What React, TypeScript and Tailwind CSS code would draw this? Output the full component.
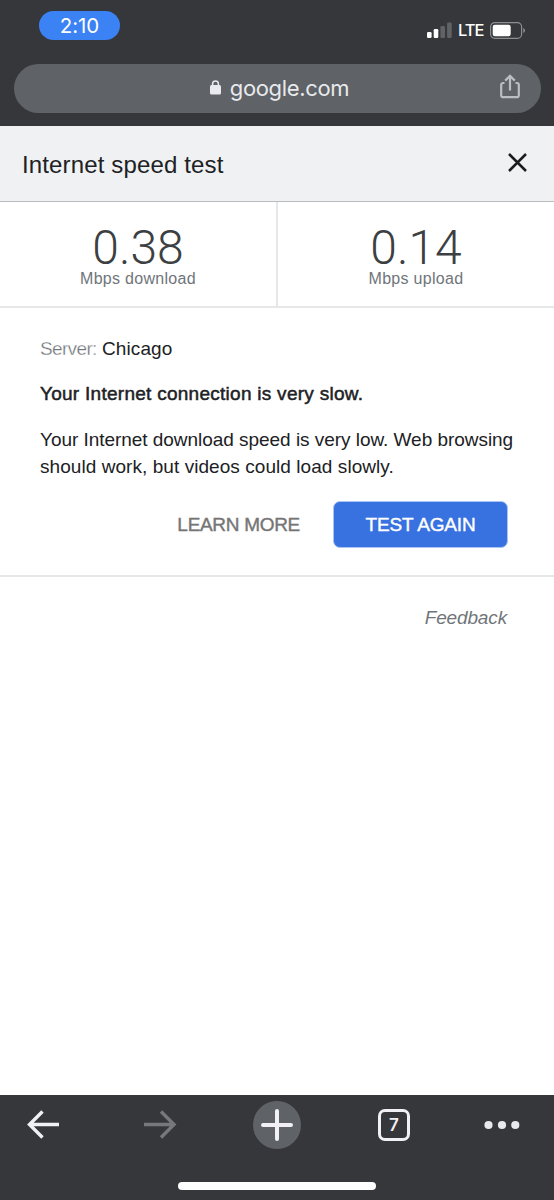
import React from 'react';

const StatusBar: React.FC = () => (
  <div className="flex h-16 items-start justify-between pl-[39px] pr-[28px]">
    <div className="mt-[11px] flex h-[29px] w-[81px] items-center justify-center rounded-full bg-[#3b82f5] pt-px font-['Inter'] text-[20.5px] leading-none tracking-[-0.1px] text-white">
      2:10
    </div>
    <div className="mt-[22px] flex h-[17px] items-center">
      {/* Signal strength */}
      <svg width="25" height="17" viewBox="0 0 25 17">
        <rect x="0" y="10" width="4.6" height="6" rx="1.2" fill="#fff" />
        <rect x="6.7" y="7" width="4.6" height="9" rx="1.2" fill="#fff" />
        <rect x="13.4" y="4" width="4.6" height="12" rx="1.2" fill="#616266" />
        <rect x="20.1" y="0.5" width="4.6" height="15.5" rx="1.2" fill="#616266" />
      </svg>
      <span className="ml-[6px] w-[26px] whitespace-nowrap font-['Inter'] text-[16.5px] font-medium leading-none tracking-[-1px] text-white">
        LTE
      </span>
      {/* Battery */}
      <svg className="ml-[6px]" width="36" height="17" viewBox="0 0 36 17">
        <rect x="0.6" y="0.6" width="31" height="15.8" rx="4.2" fill="none" stroke="#8d8e91" strokeWidth="1.2" />
        <rect x="2.7" y="2.7" width="18" height="11.6" rx="2.2" fill="#fff" />
        <path d="M33.3 6v5c1.1-.4 1.7-1.4 1.7-2.5S34.4 6.4 33.3 6Z" fill="#8d8e91" />
      </svg>
    </div>
  </div>
);

const AddressBar: React.FC = () => (
  <div className="relative mx-[13.5px] flex h-[48.5px] items-center justify-center rounded-full bg-[#5f6267]">
    <svg className="mt-[-1px] mr-[9px]" width="11" height="15" viewBox="0 0 11 15">
      <path d="M2.6 7V4a2.9 2.9 0 0 1 5.8 0V7" fill="none" stroke="#e8eaed" strokeWidth="1.5" />
      <rect x="0" y="5" width="11" height="9.5" rx="1.5" fill="#e8eaed" />
    </svg>
    <span className="mr-[-5px] whitespace-nowrap font-['Inter'] text-[22px] leading-none tracking-[-0.35px] text-[#e8eaed]">
      google.com
    </span>
    <svg className="absolute right-[21px] top-[10px]" width="20" height="25" viewBox="0 0 20 25" fill="none" stroke="#bcbec1" strokeWidth="2.2">
      <path d="M4.5 9H3a1.8 1.8 0 0 0-1.8 1.8v10.6A1.8 1.8 0 0 0 3 23.2h14a1.8 1.8 0 0 0 1.8-1.8V10.8A1.8 1.8 0 0 0 17 9h-1.5" />
      <path d="M10 16.5V2.3M5.2 6.6 10 1.9l4.8 4.7" />
    </svg>
  </div>
);

interface StatProps {
  value: string;
  label: string;
}

const Stat: React.FC<StatProps> = ({ value, label }) => (
  <div className="flex flex-1 flex-col items-center pt-[23px]">
    <span className="font-['Roboto'] text-[48px] font-light leading-[46px] text-[#3c4043]">{value}</span>
    <span className="text-[16px] leading-[16px] tracking-[0.3px] text-[#70757a]">{label}</span>
  </div>
);

const BottomBar: React.FC = () => (
  <div className="flex h-[105px] flex-col bg-[#36373a]">
    <div className="flex h-[60px] items-center pl-[27px] pr-[34px]">
      <svg width="33" height="30" viewBox="0 0 33 30" fill="none" stroke="#f1f1f5" strokeWidth="3.4">
        <path d="M32 14.5H2.3M15.5 1.5 2.5 14.5 15.5 27.5" />
      </svg>
      <svg className="ml-[84px]" width="33" height="30" viewBox="0 0 33 30" fill="none" stroke="#77787b" strokeWidth="3.4">
        <path d="M0 14.5h29.7M17 1.5 30 14.5 17 27.5" />
      </svg>
      <div className="ml-[76px] flex size-12 items-center justify-center rounded-full bg-[#5f6267]">
        <svg width="32" height="32" viewBox="0 0 32 32" stroke="#f1f1f5" strokeWidth="4" strokeLinecap="round">
          <path d="M16 2v28M2 16h28" />
        </svg>
      </div>
      <div className="ml-[77px] flex size-[32px] items-center justify-center rounded-[7px] border-[3px] border-[#f1f1f5] font-['Inter'] text-[17px] font-semibold leading-none text-[#f1f1f5]">
        7
      </div>
      <svg className="ml-auto" width="36" height="10" viewBox="0 0 36 10" fill="#e8e9ed">
        <circle cx="4.5" cy="5" r="4.1" />
        <circle cx="18" cy="5" r="4.1" />
        <circle cx="31.3" cy="5" r="4.1" />
      </svg>
    </div>
    {/* Home indicator */}
    <div className="mx-auto mt-[27px] h-[8px] w-[198px] rounded-full bg-white" />
  </div>
);

export default function App() {
  return (
    <div className="flex h-[1200px] w-[554px] flex-col bg-white font-['Liberation_Sans',sans-serif] text-[#202124]">
      <div className="h-[126px] bg-[#36373a]">
        <StatusBar />
        <AddressBar />
      </div>

      <header className="flex h-[76px] items-center justify-between border-b border-[#bbbcbe] bg-[#f0f1f3] pl-[22px] pr-[27px]">
        <h1 className="mt-[2px] whitespace-nowrap text-[24px] leading-none tracking-[0.14px]">Internet speed test</h1>
        <svg className="mt-[-3px]" width="19" height="19" viewBox="0 0 19 19" stroke="#1b1c1e" strokeWidth="2.5">
          <path d="m1 1 17 17M18 1 1 18" />
        </svg>
      </header>

      <div className="flex h-[106px] border-b-2 border-[#e6e7e8]">
        <Stat value="0.38" label="Mbps download" />
        <div className="w-[2px] bg-[#e6e7e8]" />
        <Stat value="0.14" label="Mbps upload" />
      </div>

      <section className="h-[269px] border-b-2 border-[#e6e7e8] pl-[40px] pr-[46px] pt-[27px] text-[19px] leading-[27px]">
        <p>
          <span className="mr-[0.7px] tracking-[-0.65px] text-[#70757a] [-webkit-text-stroke:0.3px_#fff]">Server: </span>
          <span className="tracking-[0.1px]">Chicago</span>
        </p>
        <p className="mt-[18px] whitespace-nowrap tracking-[0.27px] [-webkit-text-stroke:0.5px_#202124]">
          Your Internet connection is very slow.
        </p>
        <p className="mt-[19px] whitespace-nowrap">
          <span className="tracking-[-0.04px]">Your Internet download speed is very low. Web browsing</span>
          <br />
          <span className="tracking-[0.06px]">should work, but videos could load slowly.</span>
        </p>
        <div className="mt-[21px] flex items-center justify-end gap-[33px]">
          <button className="whitespace-nowrap tracking-[-0.3px] text-[#757575] [-webkit-text-stroke:0.4px_#757575]">LEARN MORE</button>
          <button className="h-[47px] w-[175px] whitespace-nowrap rounded-[7px] border border-[#a9c4f5] bg-[#3871e0] tracking-[-0.15px] text-white [-webkit-text-stroke:0.4px_#fff]">
            TEST AGAIN
          </button>
        </div>
      </section>

      <div className="flex flex-1 justify-end pr-[47px] pt-[29px]">
        <a className="text-[19px] italic leading-[24px] tracking-[-0.15px] text-[#70757a]">Feedback</a>
      </div>

      <BottomBar />
    </div>
  );
}
